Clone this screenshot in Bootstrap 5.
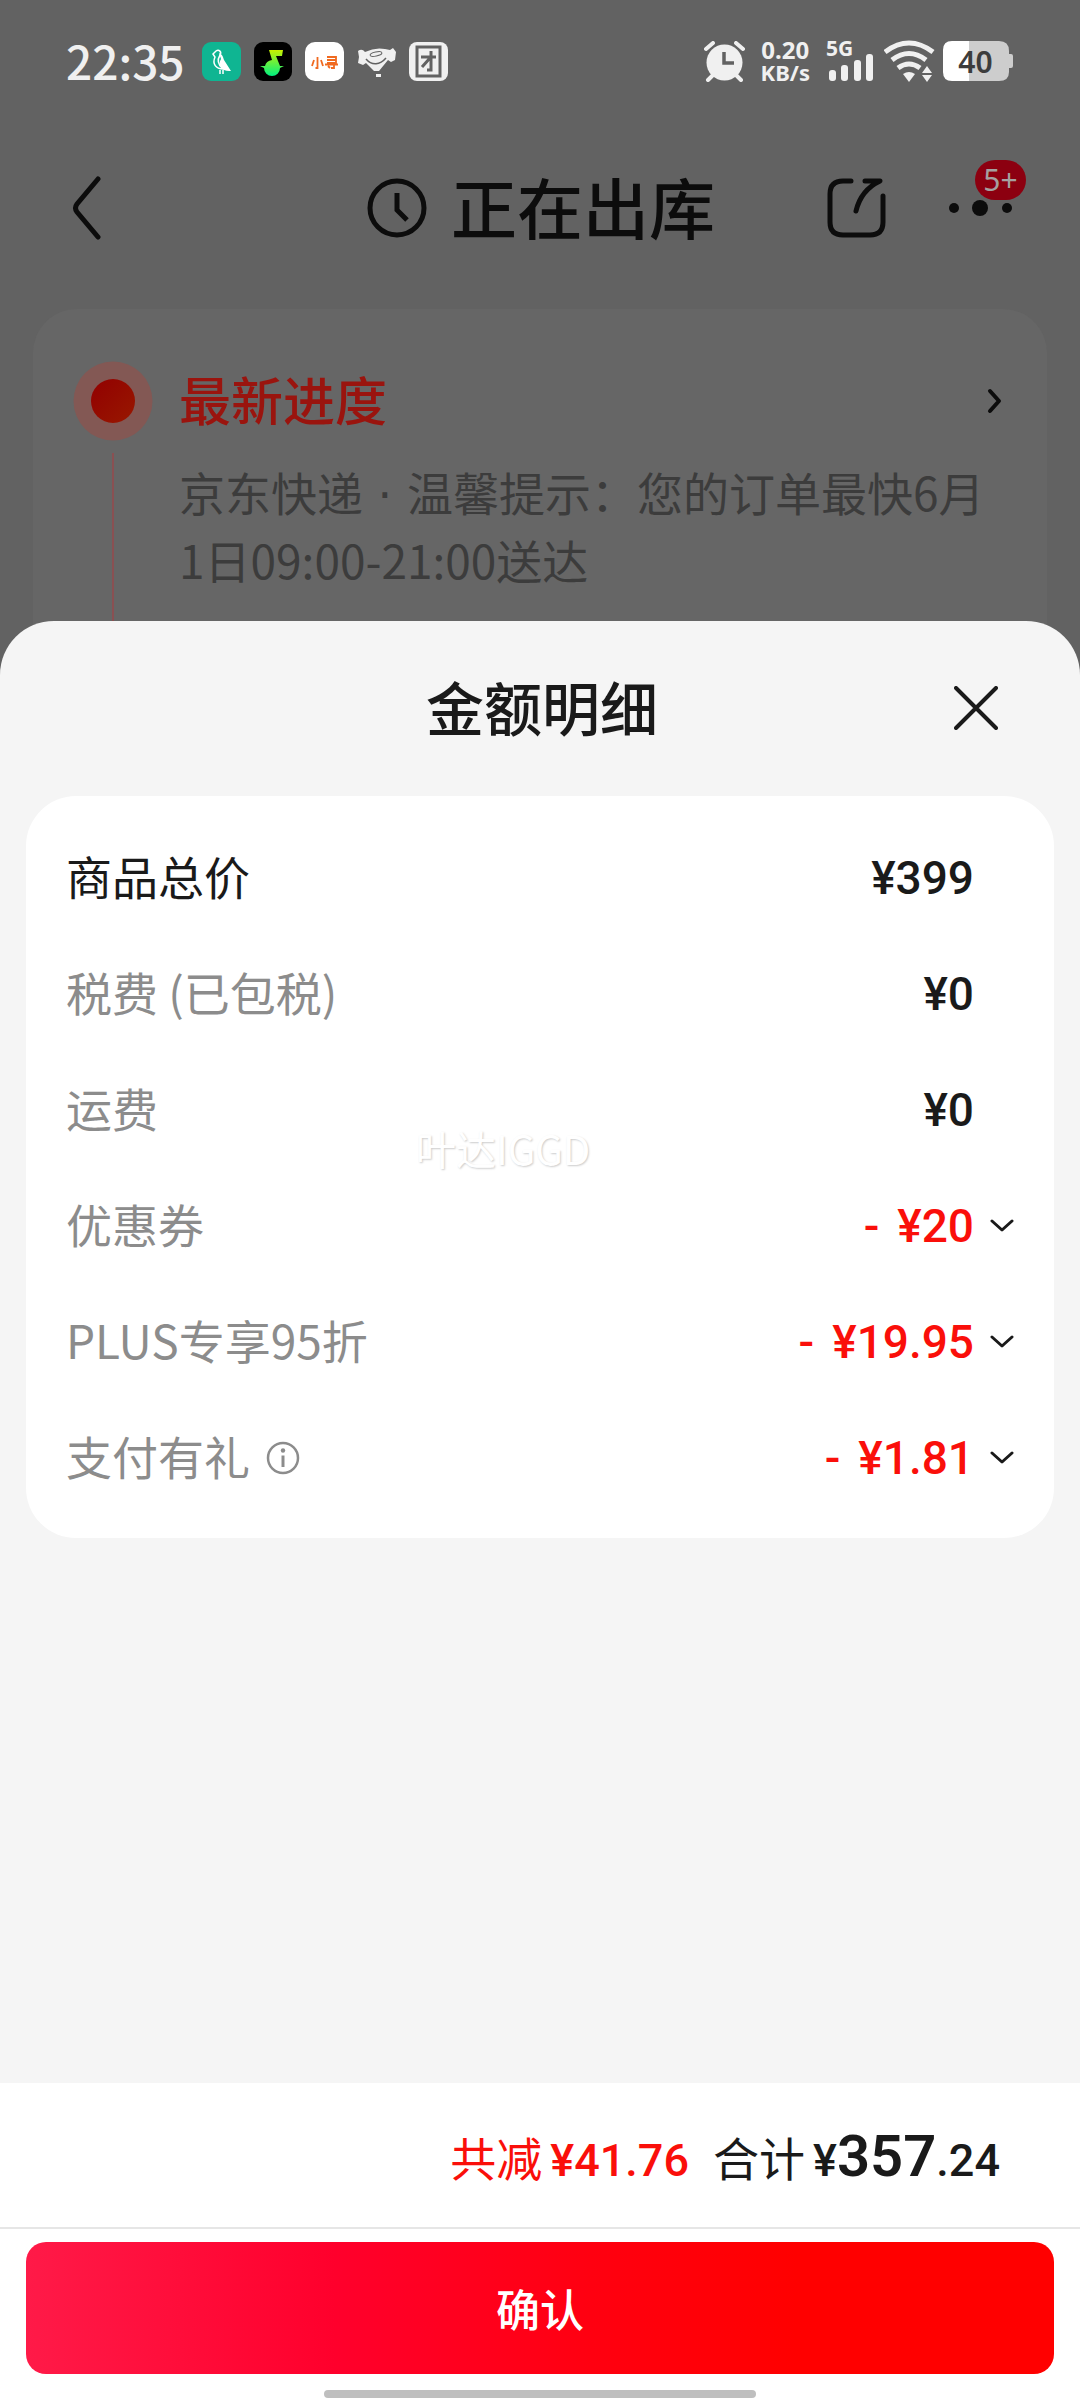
<!DOCTYPE html>
<html lang="zh-CN">
<head>
<meta charset="utf-8">
<meta name="viewport" content="width=device-width, initial-scale=1">
<title>金额明细</title>
<link href="https://cdn.jsdelivr.net/npm/bootstrap@5.3.0/dist/css/bootstrap.min.css" rel="stylesheet">
<style>
  body { font-family: "Noto Sans CJK SC", sans-serif; background: #626262; color: #1a1a1a; font-size: 46px; line-height: 64px; }
  svg { display: block; flex: none; }
  .btn-plain { display: block; border: 0; background: none; padding: 0; color: inherit; }

  /* status bar */
  .statusbar { height: 122px; padding: 0 66px; color: #f0f0f0; }
  .clock-text { font-weight: 500; line-height: 48px; padding-bottom: 2px; }
  .net-speed, .cell-label, .battery-text { font-family: "Noto Sans", "Noto Sans CJK SC", sans-serif; font-weight: 700; }
  .net-speed { line-height: 22px; font-size: 24px; }
  .net-unit { font-size: 22px; }
  .cell-label { font-size: 21px; line-height: 16px; }
  .battery { width: 71px; height: 41px; }
  .battery-text { inset: 0 6px 0 0; color: #3c3c3c; font-size: 30px; line-height: 41px; font-weight: 600; text-align: center; }
  .status-left { gap: 13px; }

  /* order header */
  .topbar { height: 171px; padding: 0 52px 0 72px; color: #0c0c0c; }
  .topbar-start { width: 183px; }
  .topbar-end { width: 201px; }
  .topbar-title { font-size: 66px; line-height: 80px; font-weight: 500; padding-bottom: 6px; }
  .count-badge { top: 2px; right: 2px; height: 40px; width: 51px; border-radius: 20px; background: #8c0010; color: #a5a0a0; font-family: "Noto Sans", sans-serif; font-size: 30px; line-height: 40px; text-align: center; }

  /* delivery progress */
  .progress-panel { margin: 16px 33px 0; padding: 52px 40px 0; height: 372px; border-radius: 44px; background: #666; }
  .rail { width: 80px; }
  .rail-line { width: 2px; background: #8a5052; margin-top: 12px; }
  .progress-body { padding-left: 26px; color: #3c3c3c; }
  .progress-title { font-size: 52px; line-height: 76px; font-weight: 500; color: #9a140e; margin-bottom: 22px; }
  .mid-dot { font-family: "DejaVu Sans", sans-serif; white-space: pre; }

  /* amount sheet */
  .sheet { position: relative; margin-top: -60px; border-radius: 54px 54px 0 0; background: #f5f5f5; }
  .sheet-head { height: 175px; padding: 0 82px; }
  .sheet-title { font-size: 58px; line-height: 70px; font-weight: 500; padding-bottom: 6px; }
  .sheet-close { padding-bottom: 2px; }
  .amounts { position: relative; margin: 0 26px; padding: 24px 40px 22px; border-radius: 50px; background: #fff; }
  .amount-row { height: 116px; }
  .item-name { padding-bottom: 6px; }
  .item-muted { color: #8c8c8c; }
  .price { font-family: Roboto, "Noto Sans CJK SC", sans-serif; font-weight: 500; color: #1a1a1a; }
  .price-fixed { margin-right: 40px; }
  .minus { margin-right: 18px; }
  .cut { color: #fa0f0a; }
  .gap-chev { gap: 16px; }
  .stamp { top: 322px; left: 390px; font-size: 40px; line-height: 60px; color: #fff; text-shadow: 1px 1px 2px #ccc; pointer-events: none; }

  /* footer */
  .foot { background: #fff; }
  .sum-row { height: 146px; padding: 6px 80px 0 26px; border-bottom: 2px solid #e6e6e6; line-height: 80px; }
  .sum-row .price { font-size: 45px; }
  .sum-row .price-big { font-size: 58px; font-weight: 600; }
  .ok-btn { margin: 13px 26px 0; height: 132px; border-radius: 20px; border: 0; color: #fff; font-size: 44px; font-weight: 500; background: linear-gradient(90deg, #ff1a48 0%, #ff002c 30%, #ff0010 55%, #ff0000 75%); }
  .home-bar { width: 40%; height: 8px; margin: 16px auto 2px; border-radius: 4px; background: #bfbfbf; }
</style>
</head>
<body>
<div class="d-flex flex-column min-vh-100">

  <div class="statusbar d-flex align-items-center justify-content-between">
    <div class="status-left d-flex align-items-center">
      <span class="clock-text me-1">22:35</span>
      <svg width="39" height="39" viewBox="0 0 39 39"><rect width="39" height="39" rx="9" fill="#0fb592"/><path d="M11 12l3-3c3-2 6 1 4 4-3 5-2 10 3 14-7 0-11-5-8-12l-2-3z" fill="none" stroke="#fff" stroke-width="1.500"/><path d="M17 11c4 2 4 4 5 7l7 11c-9 1-14-6-10-12z" fill="#fff"/><path d="M18 28v4M21 28v4" stroke="#fff" stroke-width="1.500"/></svg>
      <svg width="38" height="39" viewBox="0 0 38 39"><defs><linearGradient id="note" x2="0" y2="1"><stop stop-color="#c8f000"/><stop offset="1" stop-color="#00f080"/></linearGradient></defs><rect width="38" height="39" rx="9"/><path d="M15 8h14l-1 6h-6l4 10h4l-4 2a8 8 0 0 1-16 0l-4-2h5q1-5 7-6z" fill="url(#note)"/></svg>
      <svg width="39" height="39" viewBox="0 0 39 39"><rect width="39" height="39" rx="10" fill="#fff"/><g fill="none" stroke="#f06a20" stroke-width="1.800"><path d="M12.500 15v11h-2M9 18l-2 6M16 18l2 6M22 15h9v6h-9M22 18h9M20 22.500h13M29 21v5h-3M23 24l2 2"/></g></svg>
      <svg width="39" height="39" viewBox="0 0 39 39" fill="#f0f0f0"><path d="M1 9q4-3 7 1 10-5 20-3l5 1 3-2 3 4-1 8-4 2-3-2-9 11h-5L9 21l-3 2-5-2 1-6z"/><path d="M9 17c6 7 14 6 20-1" fill="none" stroke="#626262" stroke-width="1.500"/><ellipse cx="19" cy="12" rx="6" ry="2" transform="rotate(-12 19 12)" fill="none" stroke="#626262"/><path d="M19 32h5v3h-5z"/></svg>
      <svg width="39" height="39" viewBox="0 0 39 39"><rect width="39" height="39" rx="8" fill="#f0f0f0"/><g fill="none" stroke="#626262" stroke-width="3"><path d="M8 5h23v29H8zM12 15h15M22 9v19h-4M21 16l-8 9"/></g></svg>
    </div>
    <div class="d-flex align-items-center">
      <svg class="me-3" width="41" height="41" viewBox="0 0 41 41"><g stroke="#f0f0f0" stroke-width="4" stroke-linecap="round"><path d="M2 8l7-6M39 8l-7-6M4 39l7-7M37 39l-7-7"/></g><circle cx="20.500" cy="21.500" r="18" fill="#f0f0f0"/><path d="M20 11v11h10" fill="none" stroke="#626262" stroke-width="3.500"/></svg>
      <div class="net-speed text-center me-3">0.20<br><span class="net-unit">KB/s</span></div>
      <div class="position-relative">
        <svg width="50" height="42" viewBox="0 0 50 42" fill="#f0f0f0"><rect x="3" y="30" width="7" height="11" rx="3"/><rect x="15" y="25" width="7" height="16" rx="3"/><rect x="28" y="20" width="7" height="21" rx="3"/><rect x="40" y="14" width="7" height="27" rx="3"/></svg>
        <span class="cell-label position-absolute top-0 start-0">5G</span>
      </div>
      <svg class="ms-2 me-2" width="51" height="42" viewBox="0 0 51 42"><g fill="none" stroke="#f0f0f0" stroke-width="5"><path d="M1 12q24-18 48 0M8 20q17-13 34 0M14 28q11-8 22 0"/></g><path d="M19 34q6-4 12 0l-6 8zM38 33l5-7 5 7zM38 35h10l-5 7z" fill="#f0f0f0"/></svg>
      <div class="battery position-relative">
        <svg width="71" height="41" viewBox="0 0 71 41"><path d="M26 0h30q10 0 10 10v3h2q2 0 2 2v10q0 2-2 2h-2v4q0 9-10 9H26z" fill="#cdcdcd"/><path d="M26 0v40H9q-9 0-9-9V9q0-9 9-9z" fill="#fff"/></svg>
        <span class="battery-text position-absolute">40</span>
      </div>
    </div>
  </div>

  <header class="topbar d-flex align-items-center justify-content-between">
    <div class="topbar-start">
      <button class="btn-plain" aria-label="返回"><svg width="30" height="64" viewBox="0 0 30 64"><path d="M26 3L5 28q-3 4 0 8l21 25" fill="none" stroke="#0c0c0c" stroke-width="5" stroke-linecap="round"/></svg></button>
    </div>
    <div class="d-flex align-items-center gap-4">
      <svg width="60" height="60" viewBox="0 0 60 60" fill="none" stroke="#0c0c0c" stroke-width="5"><circle cx="30" cy="30" r="27"/><path d="M30 15v17l10 10"/></svg>
      <h1 class="topbar-title m-0">正在出库</h1>
    </div>
    <div class="topbar-end d-flex align-items-center justify-content-between">
      <button class="btn-plain" aria-label="分享"><svg width="60" height="60" viewBox="0 0 60 60" fill="none" stroke="#0c0c0c" stroke-width="5" stroke-linecap="round" stroke-linejoin="round"><path d="M24 3h-8Q3 3 3 16v28q0 13 13 13h27q13 0 13-13V18M38 3h15Q34 12 29 33"/></svg></button>
      <button class="btn-plain position-relative" aria-label="更多">
        <svg width="80" height="100" viewBox="0 0 80 100" fill="#0c0c0c"><circle cx="6" cy="50" r="5"/><circle cx="32" cy="50" r="8"/><circle cx="59" cy="50" r="5"/></svg>
        <span class="count-badge position-absolute">5+</span>
      </button>
    </div>
  </header>

  <section class="progress-panel d-flex">
    <div class="rail d-flex flex-column align-items-center">
      <svg width="80" height="80" viewBox="0 0 80 80"><defs><linearGradient id="dot" x2="1" y2="1"><stop stop-color="#920000"/><stop offset="1" stop-color="#981800"/></linearGradient></defs><circle cx="40" cy="40" r="39.500" fill="#835854"/><circle cx="40" cy="40" r="22" fill="url(#dot)"/></svg>
      <div class="rail-line flex-grow-1"></div>
    </div>
    <div class="progress-body flex-grow-1">
      <div class="d-flex justify-content-between">
        <h2 class="progress-title">最新进度</h2>
        <a href="#" aria-label="查看进度"><svg width="24" height="80" viewBox="0 0 24 80"><path d="M7 30l9 10-9 10" fill="none" stroke="#0c0c0c" stroke-width="4" stroke-linecap="round" stroke-linejoin="round"/></svg></a>
      </div>
      <p class="m-0">京东快递<span class="mid-dot"> · </span>温馨提示：您的订单最快6月1日09:00-21:00送达</p>
    </div>
  </section>

  <main class="sheet d-flex flex-column flex-grow-1">
    <div class="sheet-head d-flex align-items-center justify-content-between">
      <span class="px-4"></span>
      <h2 class="sheet-title mb-0">金额明细</h2>
      <button class="btn-plain sheet-close" aria-label="关闭"><svg width="44" height="44" viewBox="0 0 44 44"><path d="M2 2l40 40M42 2L2 42" stroke="#1a1a1a" stroke-width="4" stroke-linecap="round"/></svg></button>
    </div>

    <ul class="amounts list-unstyled">
      <li class="amount-row d-flex align-items-center justify-content-between"><span class="item-name">商品总价</span><span class="price price-fixed">¥399</span></li>
      <li class="amount-row d-flex align-items-center justify-content-between"><span class="item-name item-muted">税费 (已包税)</span><span class="price price-fixed">¥0</span></li>
      <li class="amount-row d-flex align-items-center justify-content-between"><span class="item-name item-muted">运费</span><span class="price price-fixed">¥0</span></li>
      <li class="amount-row d-flex align-items-center justify-content-between"><span class="item-name item-muted">优惠券</span>
        <button class="btn-plain price d-flex align-items-center gap-chev"><span class="cut"><span class="minus">-</span>¥20</span><svg width="24" height="14" viewBox="0 0 24 14"><path d="M2 2l10 9 10-9" fill="none" stroke="#1a1a1a" stroke-width="3" stroke-linecap="round" stroke-linejoin="round"/></svg></button></li>
      <li class="amount-row d-flex align-items-center justify-content-between"><span class="item-name item-muted">PLUS专享95折</span>
        <button class="btn-plain price d-flex align-items-center gap-chev"><span class="cut"><span class="minus">-</span>¥19.95</span><svg width="24" height="14" viewBox="0 0 24 14"><path d="M2 2l10 9 10-9" fill="none" stroke="#1a1a1a" stroke-width="3" stroke-linecap="round" stroke-linejoin="round"/></svg></button></li>
      <li class="amount-row d-flex align-items-center justify-content-between">
        <span class="item-muted d-flex align-items-center gap-3"><span class="item-name">支付有礼</span>
          <svg width="34" height="34" viewBox="0 0 34 34"><circle cx="17" cy="17" r="15" fill="none" stroke="#8c8c8c" stroke-width="2.500"/><circle cx="17" cy="9.500" r="2.200" fill="#8c8c8c"/><path d="M17 14.500V26" stroke="#8c8c8c" stroke-width="3"/></svg></span>
        <button class="btn-plain price d-flex align-items-center gap-chev"><span class="cut"><span class="minus">-</span>¥1.81</span><svg width="24" height="14" viewBox="0 0 24 14"><path d="M2 2l10 9 10-9" fill="none" stroke="#1a1a1a" stroke-width="3" stroke-linecap="round" stroke-linejoin="round"/></svg></button></li>
      <li class="stamp position-absolute">叶达IGGD</li>
    </ul>

    <footer class="foot d-flex flex-column mt-auto">
      <div class="sum-row d-flex align-items-center justify-content-end">
        <div class="d-flex align-items-baseline">
          <span class="cut me-2">共减</span><span class="price cut me-4">¥41.76</span>
          <span class="me-2">合计</span><span class="price">¥<span class="price-big">357</span>.24</span>
        </div>
      </div>
      <button class="ok-btn">确认</button>
      <div class="home-bar"></div>
    </footer>
  </main>
</div>
<script src="https://cdn.jsdelivr.net/npm/bootstrap@5.3.0/dist/js/bootstrap.bundle.min.js"></script>
</body>
</html>
